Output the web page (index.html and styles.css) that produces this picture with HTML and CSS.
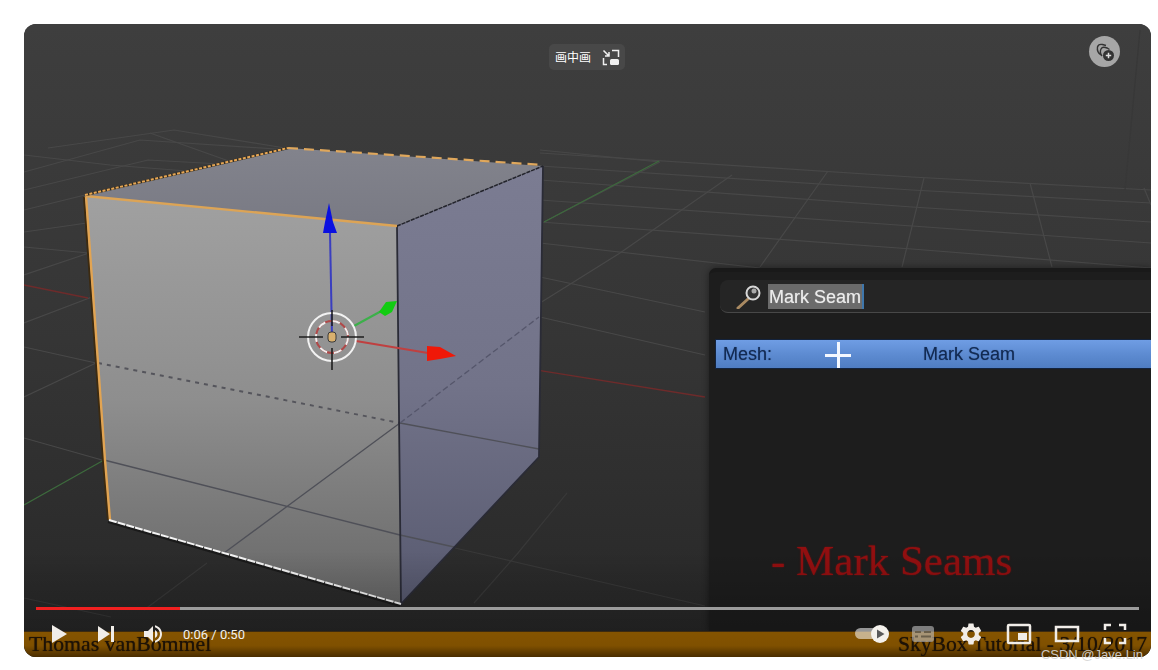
FILE: index.html
```html
<!DOCTYPE html>
<html lang="en">
<head>
<meta charset="utf-8">
<title>SkyBox Tutorial</title>
<link rel="stylesheet" href="styles.css">
</head>
<body>
<div class="page">
  <div class="player">
    <svg class="scene" viewBox="24 24 1127 633" width="1127" height="633" aria-hidden="true">
      <defs>
        <linearGradient id="bg" x1="0" y1="0" x2="0" y2="1">
          <stop offset="0" stop-color="#3e3e3e"/><stop offset=".5" stop-color="#353535"/><stop offset="1" stop-color="#272727"/>
        </linearGradient>
        <linearGradient id="front" gradientUnits="userSpaceOnUse" x1="0" y1="200" x2="0" y2="600">
          <stop offset="0" stop-color="#a0a0a0"/><stop offset=".5" stop-color="#8e8e8e"/><stop offset="1" stop-color="#686868"/>
        </linearGradient>
        <linearGradient id="top" gradientUnits="userSpaceOnUse" x1="300" y1="150" x2="300" y2="226">
          <stop offset="0" stop-color="#82838c"/><stop offset="1" stop-color="#797a84"/>
        </linearGradient>
        <linearGradient id="side" gradientUnits="userSpaceOnUse" x1="0" y1="170" x2="0" y2="600">
          <stop offset="0" stop-color="#7b7c92"/><stop offset=".5" stop-color="#727389"/><stop offset="1" stop-color="#585a70"/>
        </linearGradient>
      </defs>
      <rect x="24" y="24" width="1127" height="633" fill="url(#bg)"/>
      <g class="grid">
        <path d="M540 153L912 177L1151 190M540 166L912 190L1151 203M540 180L912 207L1151 222M540 200L912 226L1151 243M540 222L912 249L1151 268M540 243L760 268M540 277L705 312M540 317L705 355"/>
        <path d="M924 178L902 267M1030 183L1052 267M828 171L760 267M732 175L620 253L540 303M1144 188L1151 205M660 162L544 222"/>
        <path d="M48 148L174 130L285 148M24 172L140 140L290 150M24 190L148 160L240 165M24 210L85 195M24 232L87 223M24 247L89 253M24 275L89 253M24 323L92 297M24 347L96 363M24 397L96 363M24 438L102 460"/>
        <path d="M150 133L240 165L130 185M24 155L110 165L200 172M540 150L660 162"/>
        <path class="faint" d="M455 548L580 577L705 606M567 493L518 553L474 603M24 598L111 617M207 563L144 610"/>
        <path class="faint" d="M1140 30L1125 190"/>
      </g>
      <path class="axis-green" d="M659 161L544 222M237 389L104 460L24 505"/>
      <path class="axis-red" d="M24 285L88 298M480 361L705 397"/>
      <polygon points="85,196 288,148 543,166 397,226" fill="url(#top)"/>
      <polygon points="85,196 397,226 401,604 109,520" fill="url(#front)"/>
      <polygon points="397,226 543,166 539,457 401,604" fill="url(#side)"/>
      <g class="wire">
        <path d="M104 460L400 535L454 547M224 553L400 423M400 423L539 449"/>
        <path class="dash" d="M98 363L400 423"/>
        <path class="dash-thin" d="M400 423L539 317"/>
      </g>
      <path class="edge-dark" d="M397 226L401 604L539 457L543 166"/>
      <path class="edge-dark-dash" d="M397 226L543 166"/>
      <path class="edge-shade" d="M84 197L103 460L108 520"/>
      <path class="edge-orange" d="M85 196L397 226"/>
      <path class="edge-orange-left" d="M86 196L105 460L110 520"/>
      <path class="edge-orange-dot-base" d="M85 195L288 148"/>
      <path class="edge-orange-dot" d="M85 195L288 148"/>
      <path class="edge-orange-dash" d="M288 148L543 165"/>
      <path class="edge-black" d="M108 522L400 606"/>
      <path class="edge-white" d="M109 520L401 604"/>
      <g class="gizmo">
        <path class="g-blue" d="M332 337L330 232"/>
        <polygon fill="#0a10e0" points="329,203 325,222 323,233 337,233 333,222"/>
        <path class="g-green" d="M354 326L385 309"/>
        <polygon fill="#12cc12" points="397,301 386,302 379,312 385,316 392,312"/>
        <path class="g-red" d="M356 341L428 353"/>
        <polygon fill="#f01808" points="427,346 440,347 456,356 440,359 427,361"/>
        <circle class="c-white" cx="332" cy="337" r="24"/>
        <circle class="c-red" cx="332" cy="337" r="16"/>
        <circle class="c-white-dash" cx="332" cy="337" r="16"/>
        <path class="cross" d="M299 337H323M341 337H364M332 310V326M332 348V370"/>
        <rect x="328" y="332" width="8" height="10" rx="3" fill="#d9b06e" stroke="#3a3a3a"/>
      </g>
    </svg>

    <section class="panel">
      <div class="search">
        <svg class="magnifier" viewBox="0 0 26 24" width="26" height="24" aria-hidden="true">
          <path d="M12 14L2 23" stroke="#a98a62" stroke-width="3" stroke-linecap="round"/>
          <circle cx="17" cy="8" r="6.500" fill="#333" stroke="#d8d8d8" stroke-width="2"/>
          <circle cx="18" cy="6" r="2.500" fill="#aaa"/>
        </svg>
        <span class="selected">Mark Seam</span>
      </div>
      <div class="result">
        <span class="result-group">Mesh:</span>
        <span class="result-name">Mark Seam</span>
        <span class="cursor"></span>
      </div>
      <p class="seam-title">- Mark Seams</p>
    </section>

    <div class="caption">
      <span>Thomas vanBommel</span>
      <span class="caption-right">SkyBox Tutorial - 3/10/2017</span>
    </div>

    <div class="shade"></div>

    <div class="pip">
      <span class="pip-label">画中画</span>
      <svg viewBox="0 0 18 17" width="18" height="17" aria-hidden="true">
        <path d="M10 1.500H16.500V8M1.500 9V15.500H5" class="pip-line"/>
        <path d="M1.500 1.500L7 7M7 3V7H3" class="pip-line"/>
        <rect x="8" y="10" width="9" height="6" rx="1.500" fill="#f2f2f2"/>
      </svg>
    </div>

    <div class="round-btn">
      <svg viewBox="0 0 20 20" width="20" height="20" aria-hidden="true">
        <path d="M6 13C3 11 2 8 2.500 5C3 3 5 2 7.500 2.500L11 3.500" class="rb-line"/>
        <path d="M7 14C5.500 12 5 9 6 7C7 5 9.500 5 12 6L14.500 7.500" class="rb-line"/>
        <circle cx="13.500" cy="13.500" r="5.500" fill="#333"/>
        <path d="M13.500 10.800V16.200M10.800 13.500H16.200" stroke="#ddd" stroke-width="1.500"/>
      </svg>
    </div>

    <div class="controls">
      <div class="progress"><div class="progress-played"></div></div>
      <div class="bar">
        <div class="bar-group">
          <span class="btn">
            <svg viewBox="0 0 48 36" width="48" height="36" aria-hidden="true"><path class="ico" d="M16 9V27L31 18Z"/></svg>
          </span>
          <span class="btn">
            <svg viewBox="0 0 48 36" width="48" height="36" aria-hidden="true"><path class="ico" d="M14 10V26L26 18ZM27 10H30V26H27Z"/></svg>
          </span>
          <span class="btn btn-vol">
            <svg viewBox="0 0 36 36" width="36" height="36" aria-hidden="true"><path class="ico" d="M8,21 L12,21 L17,26 L17,10 L12,15 L8,15 L8,21 Z M19,14 L19,22 C20.48,21.32 21.5,19.77 21.5,18 C21.5,16.26 20.48,14.74 19,14 ZM19,11.29 C21.89,12.15 24,14.83 24,18 C24,21.17 21.89,23.85 19,24.71 L19,26.77 C23.01,25.86 26,22.28 26,18 C26,13.72 23.01,10.14 19,9.23 L19,11.29 Z"/></svg>
          </span>
          <span class="time">0:06 / 0:50</span>
        </div>
        <div class="bar-group">
          <span class="btn">
            <svg viewBox="0 0 48 36" width="48" height="36" aria-hidden="true">
              <rect x="4" y="12" width="24" height="11" rx="5.500" fill="#fff" opacity=".55"/>
              <circle cx="29" cy="18" r="9" fill="#f4f1ec"/>
              <path d="M26 13.500V22.500L33.500 18Z" fill="#5a5a5a"/>
            </svg>
          </span>
          <span class="btn">
            <svg viewBox="0 0 48 36" width="48" height="36" aria-hidden="true">
              <rect x="13" y="10" width="22" height="16" rx="3" fill="#bdbdbd" opacity=".62"/>
              <path d="M16 16H22M25 16H32M16 20.500H19M22 20.500H32" stroke="#6a5f4a" stroke-width="2"/>
            </svg>
          </span>
          <span class="btn">
            <svg viewBox="0 0 48 36" width="48" height="36" aria-hidden="true">
              <g transform="translate(11 5) scale(1.083)"><path class="ico" d="M19.140 12.940c.04-.3.06-.61.06-.94 0-.32-.02-.64-.07-.94l2.030-1.580c.18-.14.23-.41.12-.61l-1.920-3.320c-.12-.22-.37-.29-.59-.22l-2.390.96c-.5-.38-1.030-.7-1.620-.94l-.36-2.540c-.04-.24-.24-.41-.48-.41h-3.840c-.24 0-.43.17-.47.41l-.36 2.540c-.59.24-1.130.57-1.620.94l-2.390-.96c-.22-.08-.47 0-.59.22L2.740 8.870c-.12.21-.08.47.12.61l2.030 1.580c-.05.3-.09.63-.09.94s.02.64.07.94l-2.030 1.580c-.18.14-.23.41-.12.61l1.920 3.320c.12.22.37.29.59.22l2.390-.96c.5.38 1.030.7 1.620.94l.36 2.540c.05.24.24.41.48.41h3.840c.24 0 .44-.17.47-.41l.36-2.540c.59-.24 1.130-.56 1.620-.94l2.390.96c.22.08.47 0 .59-.22l1.920-3.320c.12-.22.07-.47-.12-.61l-2.010-1.580zM12 15.600c-1.980 0-3.600-1.620-3.600-3.600s1.620-3.600 3.600-3.600 3.600 1.620 3.600 3.600-1.620 3.600-3.600 3.600z"/></g>
            </svg>
          </span>
          <span class="btn">
            <svg viewBox="0 0 48 36" width="48" height="36" aria-hidden="true">
              <rect x="13" y="9" width="22" height="18" rx="1" class="ico-line"/>
              <rect x="23" y="17" width="9" height="7" fill="#f0ece6"/>
            </svg>
          </span>
          <span class="btn">
            <svg viewBox="0 0 48 36" width="48" height="36" aria-hidden="true">
              <rect x="13" y="11" width="22" height="14" class="ico-line"/>
            </svg>
          </span>
          <span class="btn">
            <svg viewBox="0 0 48 36" width="48" height="36" aria-hidden="true">
              <path class="ico-line" d="M14 14V9H20M28 9H34V14M34 22V27H28M20 27H14V22"/>
            </svg>
          </span>
        </div>
      </div>
    </div>
  </div>
  <span class="watermark">CSDN @Jave.Lin</span>
</div>
</body>
</html>
```

FILE: styles.css
```css
* { box-sizing: border-box; }
html, body { margin: 0; padding: 0; background: #fff; }
body { width: 1158px; height: 670px; overflow: hidden; }

.page {
  position: relative;
  width: 1158px;
  height: 670px;
  padding: 24px 7px 13px 24px;
}

.player {
  position: relative;
  width: 1127px;
  height: 633px;
  border-radius: 12px;
  overflow: hidden;
  background: #333;
}

/* 3D viewport drawing */
.scene { position: absolute; inset: 0; display: block; filter: blur(.6px); }
.scene path { fill: none; }
.grid path { stroke: #484848; stroke-width: 1.2; }
.grid .faint { stroke: #383838; }
.axis-green { stroke: #3d6b3d; stroke-width: 1.2; }
.axis-red { stroke: #6e2b2b; stroke-width: 1.4; }
.wire path { stroke: #4f5058; stroke-width: 1.3; }
.wire .dash { stroke: #55555c; stroke-width: 2; stroke-dasharray: 4 5; }
.wire .dash-thin { stroke: #55566b; stroke-dasharray: 6 3; }
.edge-dark { stroke: #2a2b36; stroke-width: 1.8; }
.edge-dark-dash { stroke: #23242c; stroke-width: 1.5; stroke-dasharray: 4 1; }
.edge-shade { stroke: #3c2a10; stroke-width: 2; }
.edge-orange { stroke: #dca456; stroke-width: 2.4; }
.edge-orange-left { stroke: #e2a452; stroke-width: 2.4; }
.edge-orange-dot-base { stroke: #2e2a22; stroke-width: 2.4; }
.edge-orange-dot { stroke: #e6a654; stroke-width: 2; stroke-dasharray: 3 1.5; }
.edge-orange-dash { stroke: #dfa75c; stroke-width: 2.2; stroke-dasharray: 10 6; }
.edge-black { stroke: #1a1a1a; stroke-width: 2; }
.edge-white { stroke: #f4f4f4; stroke-width: 2; stroke-dasharray: 8 1; }
.g-blue { stroke: #3a3ec0; stroke-width: 2; }
.g-green { stroke: #3cb04a; stroke-width: 2; }
.g-red { stroke: #c04040; stroke-width: 2; }
.c-white { fill: none; stroke: #f2f2f2; stroke-width: 2; }
.c-red { fill: none; stroke: #b04848; stroke-width: 2; }
.c-white-dash { fill: none; stroke: #f0f0f0; stroke-width: 2; stroke-dasharray: 8 7; }
.cross { stroke: #1e1e1e; stroke-width: 1.6; }

/* Blender search popup inside the video */
.panel {
  position: absolute;
  left: 685px;
  top: 244px;
  right: 0;
  bottom: 26px;
  display: flex;
  flex-direction: column;
  background: #1d1d1d;
  border-top: 4px solid #191919;
  border-top-left-radius: 7px;
  box-shadow: 0 0 7px rgba(0, 0, 0, .45);
  font-family: "Liberation Sans", Arial, sans-serif;
}
.search {
  display: flex;
  align-items: center;
  gap: 7px;
  height: 33px;
  margin: 8px 0 26px 11px;
  padding-left: 16px;
  background: #252525;
  border-bottom: 1px solid #484848;
  border-top-left-radius: 8px;
  border-bottom-left-radius: 8px;
}
.magnifier { flex: none; margin-top: 2px; filter: blur(.4px); }
.selected {
  display: block;
  width: 96px;
  height: 25px;
  margin-left: -1px;
  padding-left: 1px;
  background: #6b6b6b;
  border-right: 2px solid #3f77ac;
  color: #ececec;
  font-size: 18px;
  line-height: 26px;
  text-shadow: 0 0 1px rgba(236, 236, 236, .6);
  filter: blur(.45px);
}
.result {
  position: relative;
  display: flex;
  align-items: center;
  height: 30px;
  margin-left: 6px;
  padding-left: 7px;
  background: linear-gradient(#6f9de4, #5c8ad0 55%, #4f7dc2);
  border: 1px solid #13233d;
  border-width: 1px 0 1px 1px;
  color: #122a52;
  font-size: 18px;
  text-shadow: 0 0 1px rgba(18, 42, 82, .6);
}
.result-group { width: 200px; filter: blur(.45px); }
.result-name { filter: blur(.45px); }
.cursor {
  position: absolute;
  left: 109px;
  top: 2px;
  width: 26px;
  height: 26px;
  background:
    linear-gradient(#f4f8ff, #f4f8ff) center / 3px 100% no-repeat,
    linear-gradient(#f4f8ff, #f4f8ff) center / 100% 3px no-repeat;
  filter: blur(.5px);
}
.seam-title {
  margin: auto 0 47px 62px;
  color: #920f10;
  font-family: "Liberation Serif", "Times New Roman", serif;
  font-size: 43px;
  line-height: 46px;
  text-shadow: 0 0 1.500px rgba(146, 15, 16, .9);
  filter: blur(.4px);
}

/* Burned-in caption strip */
.caption {
  position: absolute;
  left: 0;
  right: 0;
  bottom: 0;
  display: flex;
  justify-content: space-between;
  align-items: center;
  height: 26px;
  padding: 0 4px 0 5px;
  background: linear-gradient(#855400, #7f5000 55%, #4a2d00);
  border-top: 1px solid #3c2a10;
  color: #1d1206;
  font-family: "Liberation Serif", "Times New Roman", serif;
  font-size: 21.800px;
  text-shadow: 0 0 1px rgba(29, 18, 6, .9);
  filter: blur(.4px);
}
.caption-right { font-size: 21.600px; }

/* Player chrome */
.shade {
  position: absolute;
  left: 0;
  right: 0;
  bottom: 26px;
  height: 80px;
  background: linear-gradient(transparent, rgba(0, 0, 0, .22));
}
.pip {
  position: absolute;
  left: 525px;
  top: 20px;
  display: flex;
  align-items: center;
  gap: 11px;
  width: 76px;
  height: 26px;
  padding-left: 6px;
  background: #484848;
  border-radius: 5px;
}
.pip-label {
  color: #fff;
  font-family: "Noto Sans CJK SC", sans-serif;
  font-size: 12px;
  line-height: 26px;
}
.pip-line { fill: none; stroke: #f0f0f0; stroke-width: 1.500; }
.round-btn {
  position: absolute;
  right: 31px;
  top: 12px;
  display: flex;
  align-items: center;
  justify-content: center;
  width: 31px;
  height: 31px;
  background: #a6a6a6;
  border-radius: 50%;
}
.rb-line { fill: none; stroke: #333; stroke-width: 1.400; }

.controls {
  position: absolute;
  left: 12px;
  right: 12px;
  bottom: 5px;
}
.progress {
  height: 3px;
  margin-bottom: 6px;
  background: #9b9b9b;
}
.progress-played {
  width: 144px;
  height: 3px;
  background: #f02020;
}
.bar {
  display: flex;
  justify-content: space-between;
  height: 36px;
}
.bar-group { display: flex; align-items: center; }
.btn { display: block; flex: none; height: 36px; }
.btn svg { display: block; }
.btn-vol { margin: 0 11px 0 4px; }
.ico { fill: #f1ede8; }
.ico-line { fill: none; stroke: #f1ede8; stroke-width: 2.500; }
.time {
  color: #f1f1f1;
  font-family: Roboto, "Liberation Sans", Arial, sans-serif;
  font-size: 13px;
}

.watermark {
  position: absolute;
  right: 15px;
  bottom: 8px;
  color: rgba(214, 214, 214, .92);
  font-family: "Liberation Sans", Arial, sans-serif;
  font-size: 13px;
  line-height: 14px;
}
```
